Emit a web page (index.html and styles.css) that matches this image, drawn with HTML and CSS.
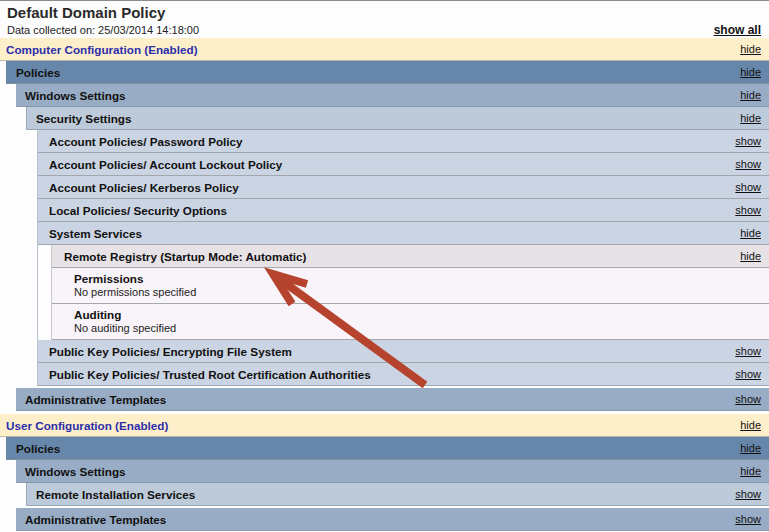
FILE: index.html
```html
<!DOCTYPE html>
<html>
<head>
<meta charset="utf-8">
<link rel="stylesheet" href="styles.css">
</head>
<body>
<div class="page">
  <header class="head">
    <div class="title">Default Domain Policy</div>
    <div class="meta"><span>Data collected on: 25/03/2014 14:18:00</span><a class="showall" href="#">show all</a></div>
  </header>

  <section class="cfg-section">
    <div class="row cfg"><span>Computer Configuration (Enabled)</span><a href="#">hide</a></div>
    <div class="l1">
      <div class="row r1"><span>Policies</span><a href="#">hide</a></div>
      <div class="l2">
        <div class="row r2"><span>Windows Settings</span><a href="#">hide</a></div>
        <div class="l3">
          <div class="row r3"><span>Security Settings</span><a href="#">hide</a></div>
          <div class="l4">
            <div class="row r4"><span>Account Policies/ Password Policy</span><a href="#">show</a></div>
            <div class="row r4"><span>Account Policies/ Account Lockout Policy</span><a href="#">show</a></div>
            <div class="row r4"><span>Account Policies/ Kerberos Policy</span><a href="#">show</a></div>
            <div class="row r4"><span>Local Policies/ Security Options</span><a href="#">show</a></div>
            <div class="row r4"><span>System Services</span><a href="#">hide</a></div>
            <div class="l5">
              <div class="row r5"><span>Remote Registry (Startup Mode: Automatic)</span><a href="#">hide</a></div>
              <div class="detail"><b>Permissions</b><span>No permissions specified</span></div>
              <div class="detail"><b>Auditing</b><span>No auditing specified</span></div>
            </div>
            <div class="row r4"><span>Public Key Policies/ Encrypting File System</span><a href="#">show</a></div>
            <div class="row r4"><span>Public Key Policies/ Trusted Root Certification Authorities</span><a href="#">show</a></div>
          </div>
        </div>
        <div class="row r2"><span>Administrative Templates</span><a href="#">show</a></div>
      </div>
    </div>
  </section>

  <section class="cfg-section">
    <div class="row cfg"><span>User Configuration (Enabled)</span><a href="#">hide</a></div>
    <div class="l1">
      <div class="row r1"><span>Policies</span><a href="#">hide</a></div>
      <div class="l2">
        <div class="row r2"><span>Windows Settings</span><a href="#">hide</a></div>
        <div class="l3">
          <div class="row r3"><span>Remote Installation Services</span><a href="#">show</a></div>
        </div>
        <div class="row r2"><span>Administrative Templates</span><a href="#">show</a></div>
      </div>
    </div>
  </section>

  <svg class="arrow" width="769" height="532" viewBox="0 0 769 532">
    <line x1="425" y1="385" x2="281" y2="280" stroke="#b5432e" stroke-width="8"/>
    <path d="M307 284 L273 274 L292 304" fill="none" stroke="#b5432e" stroke-width="8" stroke-linejoin="miter"/>
  </svg>
</div>
</body>
</html>
```

FILE: styles.css
```css
* { box-sizing: border-box; }
html, body { margin: 0; padding: 0; }
body {
  background: #fdfdfd;
  font-family: "Liberation Sans", Arial, sans-serif;
  color: #111;
}
.page {
  position: relative;
  width: 769px;
  height: 532px;
  overflow: hidden;
  border-top: 1px solid #8a8a8a;
}
.head {
  padding: 2px 8px 0 7px;
}
.title {
  font-size: 15px;
  font-weight: bold;
  color: #2a2a2a;
  line-height: 20px;
}
.meta {
  display: flex;
  justify-content: space-between;
  align-items: flex-end;
  font-size: 11px;
  line-height: 15px;
  color: #222;
  height: 15px;
}
.showall {
  font-weight: bold;
  font-size: 12px;
  color: #111;
  text-decoration: underline;
}
.row {
  display: flex;
  justify-content: space-between;
  align-items: center;
  height: 23px;
  padding: 0 8px 0 10px;
  border-bottom: 1px solid #a3a7ad;
  font-size: 11.7px;
  font-weight: bold;
  color: #111;
}
.row a {
  font-weight: normal;
  font-size: 11px;
  color: #111;
  text-decoration: underline;
}
.cfg {
  background: #fcefca;
  padding-left: 6px;
  color: #2e2eab;
  border-bottom-color: #b9b5a8;
}
.r1 { background: #6687a9; border-bottom-color: #7c8ea2; }
.r2 { background: #98adc5; border-bottom-color: #8898ab; }
.r3 { background: #bdcad9; border-bottom-color: #9aa4b0; }
.r4 { background: #cbd4e3; border-bottom-color: #a2a6ad; padding-left: 11px; }
.r5 { background: #e6e2e6; border-bottom-color: #a8a8ab; padding-left: 12px; }

.l1 { margin-left: 6px; }
.l2 { margin-left: 10px; }
.l3 { margin-left: 10px; margin-bottom: 2px; }
.l4 { margin-left: 11px; border-left: 1px solid #b9c2cf; }
.l5 { margin-left: 13px; border-left: 1px solid #c8c8cc; }
.l2 > .row, .l3 > .row { border-left: 1px solid #9aa8b8; }
.l2 > .row { padding-left: 8px; }
.l3 > .row { padding-left: 9px; }

.cfg-section { margin-bottom: 3px; }

.detail {
  background: #f9f4f9;
  border-bottom: 1px solid #a8a8ab;
  height: 36px;
  padding: 4px 0 0 22px;
  display: flex;
  flex-direction: column;
  font-size: 11.7px;
  line-height: 14px;
  color: #111;
}
.detail b { font-weight: bold; }
.detail span { font-size: 11px; line-height: 13px; color: #222; }

.arrow {
  position: absolute;
  left: 0;
  top: -1px;
  pointer-events: none;
}
```
